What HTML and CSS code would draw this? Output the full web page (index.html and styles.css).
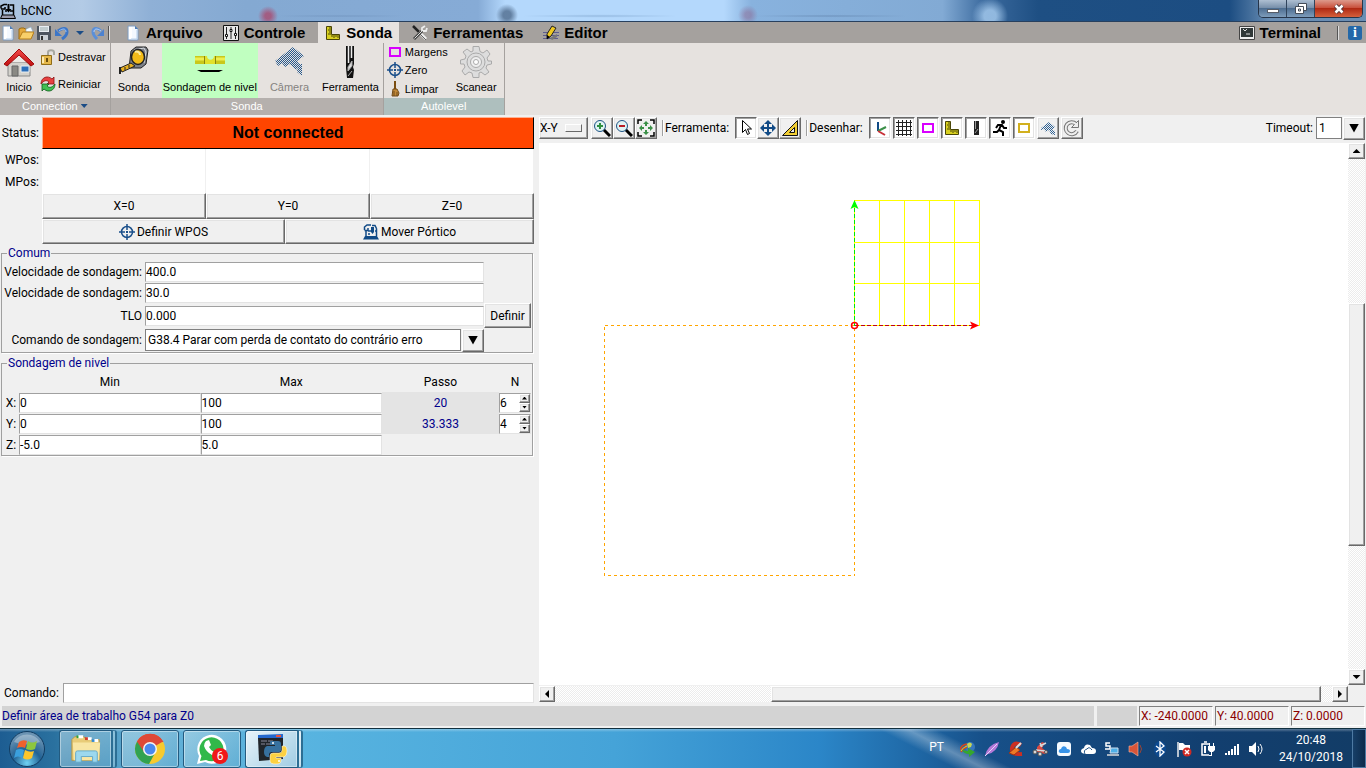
FILE: index.html
```html
<!DOCTYPE html>
<html lang="pt">
<head>
    <meta charset="UTF-8">
    <meta name="viewport" content="width=device-width, initial-scale=1.0">
    <title>bCNC</title>
    <link rel="stylesheet" href="styles.css">
</head>
<body>
    <!-- shared icons -->
    <svg class="defs" aria-hidden="true">
        <symbol id="target" viewBox="0 0 16 16"><g fill="none" stroke="#1a4f8a" stroke-width="1.5"><circle cx="8" cy="8" r="5.5"/><path d="M8 0v6M8 10v6M0 8h6M10 8h6"/></g><rect x="7" y="7" width="2" height="2" fill="#1a4f8a"/></symbol>
        <symbol id="page" viewBox="0 0 16 16"><path d="M3 1h7l3 3v11H3z" fill="#f4f9ff" stroke="#7e9cc0"/><path d="M4 2h3v12H4z" fill="#fff"/><path d="M10 1v3h3z" fill="#4f7db5"/><path d="M12 5v9H6" fill="none" stroke="#b9d0ea"/></symbol>
        <symbol id="ruler" viewBox="0 0 16 16"><path d="M1.500 1.500h5v8h8v5h-13z" fill="#d8d020" stroke="#4a4608"/><path d="M6 3H4M6 5H3M6 7H4M6 9H3M7 10v2M9 10v3M11 10v2M13 10v3" stroke="#4a4608"/></symbol>
        <symbol id="camera" viewBox="0 0 32 32"><path d="M2 15L20 1l11 9-7 5 3 4-4 5-6-6-5 3-3-4-4 3z"/><path d="M25 18h4v12l-5-4z"/></symbol>
        <symbol id="gantry" viewBox="0 0 16 16"><path d="M0 15.500h16L14 12H2z" fill="#104a86"/><path d="M3 12V7M1.500 6V3L4 1h4M1.500 6.500H5V4M13.500 12V4.500M9 1.500h3l1.500 3M5 7h3M12 7h2M5 10h2" fill="none" stroke="#104a86" stroke-width="1.500"/><path d="M8 3h3v5L9.500 10 8 8z" fill="#104a86"/></symbol>
        <symbol id="bit" viewBox="0 0 10 32"><path d="M1 0h8v18l-1 3 1 3-1 8H2L1 22z" fill="#111"/><path d="M3.500 0v17M6.500 0v12" stroke="#eee" stroke-width="1.500"/><path d="M7 15L3 21v4l4-5zM7 25l-4 5" stroke="#aaa" fill="#ddd"/></symbol>
        <pattern id="stipple" width="2" height="2" patternUnits="userSpaceOnUse"><path d="M0 0h1v1H0zM1 1h1v1H1z" fill="#2d6093"/></pattern>
        <pattern id="stippleBig" width="2" height="2" patternUnits="userSpaceOnUse"><path d="M0 0h1v1H0zM1 1h1v1H1z" fill="#26588c"/></pattern>
        <linearGradient id="roof" x2="0" y2="1"><stop stop-color="#f24a4a"/><stop offset="1" stop-color="#c01010"/></linearGradient>
        <radialGradient id="orb" cx=".5" cy=".9" r=".8"><stop stop-color="#6fd2f4"/><stop offset=".5" stop-color="#226294"/><stop offset="1" stop-color="#6b93b3"/></radialGradient>
    </svg>

    <header class="titlebar">
        <svg class="icon16" viewBox="0 0 16 16"><path d="M.5 15.500h15L14 12H2z" fill="#99a" stroke="#000"/><path d="M2.500 12V7M1 5.500V3l3-1.500h3M1 6h4V4M13.500 12V2H10M5 8h2M10 8h3" fill="none" stroke="#000" stroke-width="1.500"/><path d="M7.500 1h2v5h2L8.500 9.500 5.500 6h2z"/></svg>
        <h1>bCNC</h1>
        <div class="window-buttons">
            <button class="minimize" aria-label="Minimizar"><svg viewBox="0 0 14 12"><rect x="1.500" y="6.500" width="11" height="3" fill="#fff" stroke="#555c68"/></svg></button>
            <button class="restore" aria-label="Restaurar"><svg viewBox="0 0 14 12"><path d="M4.500.5h8v7h-8z" fill="#fff" stroke="#444c58"/><path d="M1.500 3.500h8v7h-8z" fill="#fff" stroke="#444c58"/><path d="M4.500 6h2v2h-2z" fill="#fff" stroke="#444c58"/></svg></button>
            <button class="close" aria-label="Fechar"><svg viewBox="0 0 14 12"><path d="M3.500 2.500l7 7M10.500 2.500l-7 7" stroke="#55363a" stroke-width="4.500"/><path d="M3.500 2.500l7 7M10.500 2.500l-7 7" stroke="#fff" stroke-width="2.500"/></svg></button>
        </div>
    </header>

    <nav class="tabbar">
        <div class="quick">
            <button aria-label="Novo"><svg class="icon16"><use href="#page"/></svg></button>
            <button aria-label="Abrir"><svg class="icon16" viewBox="0 0 16 16"><path d="M1 14V4l2-1h3l1 1h6v3" fill="#e5a93a" stroke="#9a6a12"/><path d="M8 4l5-2 2 5H8z" fill="#f5fbff" stroke="#86a9c8" stroke-width=".6"/><path d="M1 14L4.500 7H16l-3 7z" fill="#f8cf6a" stroke="#b47c18"/></svg></button>
            <button aria-label="Salvar"><svg class="icon16" viewBox="0 0 16 16"><path d="M1 1h14v14H1z" fill="#4d5560"/><path d="M3 1h10v6H3z" fill="#e9eef3"/><path d="M4 3h8M4 5h8" stroke="#9aa"/><path d="M4 10h8v5H4z" fill="#ccd2d8"/><path d="M5 11h2v4H5z" fill="#333"/></svg></button>
            <button aria-label="Desfazer"><svg class="icon16" viewBox="0 0 16 16"><path d="M4 6c5-4 9-3 9 1 0 3-2 5-5 7" fill="none" stroke="#3c76c8" stroke-width="3"/><path d="M1 4v7h7z" fill="#3c76c8"/><path d="M5 6c4-3 7-2.500 7 1" fill="none" stroke="#9fc4f5"/></svg></button>
            <button aria-label="Histórico"><svg class="icon16" viewBox="0 0 16 16"><path d="M4 6h8l-4 4z" fill="#1b4c86"/></svg></button>
            <button aria-label="Refazer"><svg class="icon16" viewBox="0 0 16 16"><path d="M11 6C7 2 3 3 3 7c0 3 2 5 4 7" fill="none" stroke="#5a8fd8" stroke-width="3"/><path d="M14 4v7H7z" fill="#4c82d0"/><path d="M11 6C7 3 4 3.500 4 7" fill="none" stroke="#b4d2fa"/></svg></button>
            <span class="bar"></span>
        </div>
        <div class="tabs">
            <button class="tab"><svg class="icon16"><use href="#page"/></svg>Arquivo</button>
            <button class="tab"><svg class="icon16" viewBox="0 0 16 16"><path d="M.5.5h15v15H.5z" fill="#e8e8e8" stroke="#111"/><path d="M3.500 2v12M8 2v12M12.500 2v12" stroke="#222"/><path d="M2.500 9.500h2v2h-2zM7 4.500h2v2H7zM11.500 8.500h2v2h-2z" fill="#fff" stroke="#111"/></svg>Controle</button>
            <button class="tab active"><svg class="icon16"><use href="#ruler"/></svg>Sonda</button>
            <button class="tab"><svg class="icon16" viewBox="0 0 16 16"><path d="M1 1l6 6" stroke="#222" stroke-width="2.500"/><path d="M7 7l7 7" stroke="#eee" stroke-width="3"/><path d="M7 8l7 7" stroke="#666"/><path d="M2 14l8-8" stroke="#444" stroke-width="3"/><path d="M2.500 13.500l8-8" stroke="#ddd"/><path d="M10 6V3l3-2M11 6h3l1-3" fill="none" stroke="#eee" stroke-width="1.800"/></svg>Ferramentas</button>
            <button class="tab"><svg class="icon16" viewBox="0 0 16 16"><path d="M0 7.500h16M0 10.500h16M0 13.500h15" stroke="#5c5c90"/><path d="M7 13l7-4v3l-5 3z" fill="#777"/><path d="M4 9l5-8 4 2-5 8-4 3z" fill="#f0c820" stroke="#222"/><path d="M4 10v4l3-2z"/></svg>Editor</button>
        </div>
        <div class="tabs right">
            <button class="tab"><svg class="icon16" viewBox="0 0 16 16"><path d="M.5 1.500h15v13H.5z" fill="#eee" stroke="#444"/><path d="M2 3h12v9H2z" fill="#303838"/><path d="M4 4l2 2 2-2M7 9h4" fill="none" stroke="#ddd"/></svg>Terminal</button>
            <span class="bar"></span>
            <button class="info" aria-label="Informação">i</button>
        </div>
    </nav>

    <section class="ribbon">
        <div class="group">
            <div class="tools">
                <button class="big"><svg class="icon32" viewBox="0 0 32 32"><path d="M5 16h22v14H5z" fill="#d4d2cc" stroke="#888"/><path d="M9 20h6v10H9z" fill="#8a8984" stroke="#666"/><path d="M18 20h8v6h-8z" fill="#2d6fb8" stroke="#e9eef2"/><path d="M4 16L16 4l12 12" fill="#eceae6"/><path d="M1 18L16 3l15 15-3 2L16 9 4 20z" fill="url(#roof)" stroke="#a00c0c"/></svg>Inicio</button>
                <div class="stack">
                    <button><svg class="icon16" viewBox="0 0 16 16"><path d="M8 7V3.500C8 .5 14 .5 14 3.500V6" fill="none" stroke="#a8a8a0" stroke-width="2"/><path d="M1.500 6.500h10v9h-10z" fill="#e6b84a" stroke="#8f6c18"/><path d="M3 8v6" stroke="#fbe9b0" stroke-width="2"/><path d="M6 9h2v4H6z" fill="#6b4d0c"/></svg>Destravar</button>
                    <button><svg class="icon16" viewBox="0 0 16 16"><path d="M1 8C1 1 8-1 12 3l2-2v7H7l2-2C7 4 4 4 1 8z" fill="#e84040" stroke="#8c1010" stroke-width=".8"/><path d="M15 8c0 7-7 9-11 5l-2 2V8h7l-2 2c2 2 5 2 8-2z" fill="#42c052" stroke="#0d5c1a" stroke-width=".8"/></svg>Reiniciar</button>
                </div>
            </div>
            <div class="caption">Connection <span class="down"></span></div>
        </div>
        <div class="group">
            <div class="tools spaced">
                <button class="big"><svg class="icon32" viewBox="0 0 32 32"><path d="M13 5l5-4h10l2 3-2 14-5 4H11z" fill="#7c8088" stroke="#222"/><path d="M16 4l10-2 2 4-2 11" fill="none" stroke="#d5d8dc"/><ellipse cx="20" cy="11" rx="6.500" ry="7.500" fill="#f3bb18" stroke="#222" stroke-width="1.500"/><path d="M17 6c2-1 5 0 5 3" fill="none" stroke="#ffeb9a" stroke-width="2"/><path d="M2 22l11-5 4 3-13 6z" fill="#e8b020" stroke="#222"/><path d="M2 21v7" stroke="#222" stroke-width="2"/><path d="M7 21v3M11 19v3" stroke="#222"/></svg>Sonda</button>
                <button class="big selected"><svg class="icon32" viewBox="0 0 32 32"><path d="M1 10h30v8H1z" fill="#c9c81c"/><path d="M1 13h30" stroke="#eeee50" stroke-width="3"/><path d="M11 10h10v8H11z" fill="#e2e12c"/><path d="M10.500 10v8M21.500 10v8" stroke="#888510"/><path d="M13 10h7c0 5-7 5-7 0" fill="#c0ffc0"/><path d="M3 24h26l-4 2H7z"/></svg>Sondagem de nivel</button>
                <button class="big" disabled><svg class="icon32" fill="url(#stippleBig)"><use href="#camera"/></svg>Câmera</button>
                <button class="big"><svg class="icon32" viewBox="-11 0 32 32"><use href="#bit" width="10" height="32"/></svg>Ferramenta</button>
            </div>
            <div class="caption">Sonda</div>
        </div>
        <div class="group level">
            <div class="tools">
                <div class="stack">
                    <button><svg class="icon16" viewBox="0 0 16 16"><path d="M3 4h10v8H3z" fill="none" stroke="#d800ff" stroke-width="2"/></svg>Margens</button>
                    <button><svg class="icon16"><use href="#target"/></svg>Zero</button>
                    <button><svg class="icon16" viewBox="0 0 16 16"><path d="M8 0v8" stroke="#7a4d10" stroke-width="2"/><path d="M6 8h4l2 4-1 3H5z" fill="#c08838" stroke="#714b18"/><path d="M7 10v5M10 11v4" stroke="#714b18"/></svg>Limpar</button>
                </div>
                <button class="big"><svg class="icon32" viewBox="0 0 32 32"><g fill="#ddd" stroke="#aaa"><path d="M13 .5h6l1 5 3 1.500 4-3 3 4-3 4 1 3h3.500v3L27 19l-1 3 3 4-4 3-4-3-2 1v4.500h-6L12 27l-3-1-4 3-3-4 3-4-1-3H.5v-4L5 13l1-3-3-4 4-3 4 3 2-1z"/><circle cx="16" cy="16" r="9"/><circle cx="16" cy="16" r="5.500" fill="#eee"/><circle cx="16" cy="16" r="2.500" fill="#fff"/></g></svg>Scanear</button>
            </div>
            <div class="caption">Autolevel</div>
        </div>
    </section>

    <main class="workspace">
        <section class="panel">
            <div class="dro">
                <span class="name">Status:</span>
                <button class="status">Not connected</button>
                <div class="name axis-names"><span>WPos:</span><span>MPos:</span></div>
                <div class="readout"></div><div class="readout"></div><div class="readout"></div>
                <div class="zeros"><button class="raised">X=0</button><button class="raised">Y=0</button><button class="raised">Z=0</button></div>
                <div class="moves">
                    <button class="raised"><svg class="icon16"><use href="#target"/></svg>Definir WPOS</button>
                    <button class="raised"><svg class="icon16"><use href="#gantry"/></svg>Mover Pórtico</button>
                </div>
            </div>

            <fieldset class="common">
                <legend>Comum</legend>
                <label for="fast">Velocidade de sondagem:</label><input type="text" id="fast" value="400.0">
                <label for="feed">Velocidade de sondagem:</label><input type="text" id="feed" value="30.0">
                <label for="tlo">TLO</label><input type="text" id="tlo" value="0.000"><button class="raised">Definir</button>
                <label for="cmd">Comando de sondagem:</label>
                <div class="combo">
                    <select id="cmd"><option>G38.4 Parar com perda de contato do contrário erro</option></select>
                    <button class="raised" aria-label="Abrir lista"><span class="arrow"></span></button>
                </div>
            </fieldset>

            <fieldset>
                <legend>Sondagem de nivel</legend>
                <table class="level-table">
                    <thead>
                        <tr><th class="axis"></th><th>Min</th><th>Max</th><th class="step">Passo</th><th class="count">N</th></tr>
                    </thead>
                    <tbody>
                        <tr>
                            <th>X:</th>
                            <td><input type="text" value="0" aria-label="X Min"></td>
                            <td><input type="text" value="100" aria-label="X Max"></td>
                            <td class="calc">20</td>
                            <td><div class="spin"><input type="text" value="6" aria-label="X N"><div><button class="raised" aria-label="Mais"><span class="arrow up"></span></button><button class="raised" aria-label="Menos"><span class="arrow"></span></button></div></div></td>
                        </tr>
                        <tr>
                            <th>Y:</th>
                            <td><input type="text" value="0" aria-label="Y Min"></td>
                            <td><input type="text" value="100" aria-label="Y Max"></td>
                            <td class="calc">33.333</td>
                            <td><div class="spin"><input type="text" value="4" aria-label="Y N"><div><button class="raised" aria-label="Mais"><span class="arrow up"></span></button><button class="raised" aria-label="Menos"><span class="arrow"></span></button></div></div></td>
                        </tr>
                        <tr>
                            <th>Z:</th>
                            <td><input type="text" value="-5.0" aria-label="Z Min"></td>
                            <td><input type="text" value="5.0" aria-label="Z Max"></td>
                            <td></td>
                            <td></td>
                        </tr>
                    </tbody>
                </table>
            </fieldset>

            <div class="command">
                <label for="command">Comando:</label>
                <input type="text" id="command">
            </div>
        </section>

        <section class="view">
            <div class="toolbar">
                <div class="option raised"><select aria-label="Vista"><option>X-Y</option></select></div>
                <div class="set">
                    <button class="raised" aria-label="Ampliar"><svg class="icon18" viewBox="0 0 18 18"><path d="M10 10l7 7" stroke="#000" stroke-width="3"/><circle cx="7" cy="7" r="5.500" fill="#dff3f3" stroke="#1d5385"/><path d="M7 4v6M4 7h6" stroke="#2f9040" stroke-width="2"/></svg></button>
                    <button class="raised" aria-label="Reduzir"><svg class="icon18" viewBox="0 0 18 18"><path d="M10 10l7 7" stroke="#000" stroke-width="3"/><circle cx="7" cy="7" r="5.500" fill="#dff3f3" stroke="#1d5385"/><path d="M4 7h6" stroke="#b81c24" stroke-width="2"/></svg></button>
                    <button class="raised" aria-label="Ajustar"><svg class="icon18" viewBox="0 0 18 18"><path d="M1 5V1h4M13 1h4v4M17 13v4h-4M5 17H1v-4" fill="none" stroke="#000" stroke-width="1.500"/><path d="M9 2l3 3h-2v2H8V5H6zM9 16l3-3h-2v-2H8v2H6zM2 9l3-3v2h2v2H5v2zM16 9l-3-3v2h-2v2h2v2z" fill="#3b9048"/></svg></button>
                </div>
                <span class="rule"></span>
                <span class="text">Ferramenta:</span>
                <div class="set">
                    <button class="sunken" aria-label="Selecionar"><svg class="icon18" viewBox="0 0 18 18"><path d="M5.500 1.500v12l3-3 2 5 2-1-2-4.500h4z" fill="#fff" stroke="#000"/></svg></button>
                    <button class="raised" aria-label="Mover"><svg class="icon18" viewBox="0 0 18 18"><path d="M9 3v12M3 9h12" stroke="#104a86" stroke-width="2"/><path d="M9 1l4 4H5zM9 17l4-4H5zM1 9l4-4v8zM17 9l-4-4v8z" fill="#104a86"/></svg></button>
                    <button class="raised" aria-label="Medir"><svg class="icon18" viewBox="0 0 18 18"><path d="M1.500 16.500h15v-15z" fill="#f2cf35" stroke="#111"/><path d="M8.500 13.500h5v-5z" fill="#eee" stroke="#111"/></svg></button>
                </div>
                <span class="rule"></span>
                <span class="text">Desenhar:</span>
                <div class="set draw">
                    <button class="sunken" aria-label="Eixos"><svg class="icon18" viewBox="0 0 18 18"><g stroke-width="2" fill="none"><path d="M7 3v9" stroke="#104a86"/><path d="M7 12l8-4" stroke="#3b9048"/><path d="M7 12l7 4" stroke="#c83038"/></g></svg></button>
                    <button class="sunken" aria-label="Grade"><svg class="icon18" viewBox="0 0 18 18"><path d="M1 3.500h16M1 7.500h16M1 11.500h16M1 15.500h16M3.500 1v16M7.500 1v16M11.500 1v16M15.500 1v16" stroke="#222"/></svg></button>
                    <button class="sunken" aria-label="Margens"><svg class="icon18" viewBox="0 0 18 18"><path d="M4 5h10v8H4z" fill="none" stroke="#d800ff" stroke-width="2"/></svg></button>
                    <button class="sunken" aria-label="Sonda"><svg class="icon16"><use href="#ruler"/></svg></button>
                    <button class="sunken" aria-label="Caminhos"><svg class="icon18" viewBox="0 0 18 18"><path d="M7 2h5v14H7z" fill="#222"/><path d="M8.500 2v8M8 14l3-4" stroke="#999"/></svg></button>
                    <button class="sunken" aria-label="Rápidos"><svg class="icon18" viewBox="0 0 18 18"><circle cx="12" cy="3" r="2"/><path d="M5 9l2-3h4l2 3h3M10 6l-2 5 4 2v4M8 11l-2 2H2" fill="none" stroke="#000" stroke-width="2"/></svg></button>
                    <button class="sunken" aria-label="Área de trabalho"><svg class="icon18" viewBox="0 0 18 18"><path d="M4 5h10v8H4z" fill="none" stroke="#d2b01e" stroke-width="2"/></svg></button>
                    <button class="raised" aria-label="Câmera"><svg class="icon18" fill="url(#stipple)" viewBox="0 0 18 18"><path d="M2 9l8-6 6 5-3 3 3 1v4l-4-1-2-4-3 2-2-3-3 1z"/></svg></button>
                    <button class="raised" aria-label="Atualizar"><svg class="icon18" viewBox="0 0 18 18"><path d="M14 12a6 6 0 1 1-1-7" fill="none" stroke="#777" stroke-width="4"/><path d="M15.500 1.500v7h-7z" fill="#eee" stroke="#777"/><path d="M14 12a6 6 0 1 1-1-7" fill="none" stroke="#eee" stroke-width="2"/></svg></button>
                </div>
                <div class="timeout">
                    <label for="timeout">Timeout:</label>
                    <div class="combo">
                        <select id="timeout"><option>1</option></select>
                        <button class="raised" aria-label="Abrir lista"><span class="arrow"></span></button>
                    </div>
                </div>
            </div>
            <div class="canvas-area">
                <svg class="canvas">
                    <g fill="none" shape-rendering="crispEdges">
                        <path d="M65.500 182.500h250v250h-250z" stroke="orange" stroke-dasharray="3 3"/>
                        <path d="M315.500 57.500h125v125h-125zM315.500 99.500h125M315.500 140.500h125M340.500 57.500v125M365.500 57.500v125M390.500 57.500v125M415.500 57.500v125" stroke="#ff0"/>
                        <path d="M315.500 182.500V60" stroke="#00e800" stroke-dasharray="4 2"/>
                        <path d="M315.500 182.500H436" stroke="#c00018" stroke-dasharray="4 2"/>
                    </g>
                    <path d="M315.500 57l4 9-4-2-4 2z" fill="#0f0"/>
                    <path d="M440 182.500l-9-4 2 4-2 4z" fill="red"/>
                    <circle cx="315.500" cy="182.500" r="3" fill="none" stroke="red" stroke-width="1.500"/>
                </svg>
                <div class="scroll vertical">
                    <button class="raised" aria-label="Acima"><span class="arrow up"></span></button>
                    <div class="track"><div class="thumb raised"></div></div>
                    <button class="raised" aria-label="Abaixo"><span class="arrow"></span></button>
                </div>
                <div class="scroll horizontal">
                    <button class="raised" aria-label="Esquerda"><span class="arrow left"></span></button>
                    <div class="track"><div class="thumb raised"></div></div>
                    <button class="raised" aria-label="Direita"><span class="arrow right"></span></button>
                </div>
            </div>
        </section>
    </main>

    <footer class="statusbar">
        <span class="message">Definir área de trabalho G54 para Z0</span>
        <span class="buffer"></span>
        <span class="coord">X: -240.0000</span>
        <span class="coord">Y: 40.0000</span>
        <span class="coord">Z: 0.0000</span>
    </footer>

    <div class="taskbar">
        <button class="start" aria-label="Iniciar"><svg viewBox="0 0 38 38"><circle cx="19" cy="19" r="17.500" fill="url(#orb)" stroke="#113c62"/><path d="M6 12a15 15 0 0 1 26 0q-13 5-26 0" fill="#fff" opacity=".3"/><path d="M11 12q4-3 8-1l-2 7q-4-2-8 0z" fill="#f0602c"/><path d="M20 11q4 3 9 0l-2 8q-4 2-9 0z" fill="#8cc63e"/><path d="M8 20q4-2 8 0l-2 8q-4-3-8 0z" fill="#3ba0dd"/><path d="M17 20q5 3 9 1l-2 7q-5 3-9 0z" fill="#fcc62c"/></svg></button>
        <div class="apps">
            <button class="app grouped" aria-label="Explorador"><svg viewBox="0 0 34 32"><path d="M2 6l3-3h10l2 3h14v22H2z" fill="#e8cc78" stroke="#b59645"/><path d="M8 3h6M17 5h6M24 7h6" stroke="#fff" stroke-width="3"/><path d="M7 3h2" stroke="#2da038" stroke-width="3"/><path d="M16 5h3" stroke="#d33c2c" stroke-width="3"/><path d="M23 7h3" stroke="#3188d0" stroke-width="3"/><path d="M3 9h29l-1 19H4z" fill="#f8e6a4"/><path d="M6 30V20q0-2 2-2h19q2 0 2 2v10h-5v-6H12v6z" fill="#9cd8ee" stroke="#62a8c8"/></svg></button>
            <button class="app" aria-label="Chrome"><svg viewBox="0 0 32 32"><circle cx="16" cy="16" r="15" fill="#f7ca2e"/><path d="M16 16L3 8.500A15 15 0 0 1 29 8.500z" fill="#de4837"/><path d="M16 16L3 8.500A15 15 0 0 0 15 31l6-11z" fill="#31a252"/><path d="M16 9h13.500A15 15 0 0 0 3 8.500L10 19z" fill="#de4837"/><circle cx="16" cy="16" r="7" fill="#f4f4f4"/><circle cx="16" cy="16" r="5.500" fill="#4a88ee"/></svg></button>
            <button class="app" aria-label="WhatsApp"><svg viewBox="0 0 32 32"><path d="M1 31l2-8A14.500 14.500 0 1 1 9 29z" fill="#fff"/><path d="M4 28l1.500-5A12 12 0 1 1 10 27z" fill="#31b84a"/><path d="M10 8l3-1 2 5-2 2q2 4 5 5l2-2 5 2-1 3q-3 3-8 0-6-3-8-9 0-3 2-5" fill="#fff"/></svg><span class="badge">6</span></button>
            <button class="app current grouped" aria-label="Python"><svg viewBox="0 0 32 32"><path d="M2 2l25-1v4L2 6z" fill="#2468cc"/><path d="M20 2h5v2h-5z" fill="#ec5038"/><path d="M2 5h25v21L3 28z" fill="#20252a"/><path d="M5 8h6M12 8h5M5 11h4M10 11h5" stroke="#889"/><path d="M15 8h7q3 0 3 3v6q0 2-3 2h-6q-3 0-3 3v2h-2q-3-1-3-5 0-5 3-6h8v-1h-5v-3q0-1 1-1" fill="#37719f"/><path d="M26 13h3q2 1 2 5 0 5-3 6h-8v1h5v3q0 3-5 3-6 0-6-3v-5q0-3 3-3h6q3 0 3-3z" fill="#fcd142" stroke="#fff" stroke-width=".5"/><circle cx="17" cy="10" r="1" fill="#fff"/><circle cx="23" cy="28" r="1" fill="#fff"/></svg></button>
        </div>
        <div class="tray">
            <span class="lang">PT</span>
            <svg class="icon16" viewBox="0 0 16 16"><circle cx="10" cy="6" r="5" fill="#3676bc"/><path d="M7 3q3-3 5 0l-1 3-3 1z" fill="#c7d654"/><path d="M0 9q1-5 7-6M1 11q2-4 6-5" fill="none" stroke="#d4461c" stroke-width="1.500"/><path d="M1 10q2-4 6-5" fill="none" stroke="#efcc20"/><path d="M2 9l6 1V7l7 4-6 5v-3q-5 0-7-4" fill="#35a72d"/></svg>
            <svg class="icon16" viewBox="0 0 16 16"><path d="M1 15Q3 4 15 1 13 11 4 13z" fill="#b47ad8"/><path d="M1 15L13 3" stroke="#ead2f8"/></svg>
            <svg class="icon16" viewBox="0 0 16 16"><path d="M13 4Q6 0 4 7q-1 7 10 6" fill="none" stroke="#cc2f22" stroke-width="4"/><path d="M8 6l4 3-6 5-5-2z" fill="#ec7a26" stroke="#a03214"/><path d="M8 7l5-5" stroke="#ddd" stroke-width="2"/></svg>
            <svg class="icon16" viewBox="0 0 16 16"><path d="M5 6l5-5 3 1-3 5 4 3-1 3-8-2z" fill="#d84a42"/><path d="M8 5l6-3M4 9l9 1M8 2l2 4" stroke="#d4dadd" stroke-width="1.500"/><circle cx="3" cy="11" r="2" fill="#d8d8d8" stroke="#555"/><circle cx="8" cy="13" r="2" fill="#d8d8d8" stroke="#555"/><circle cx="14" cy="11" r="1.500" fill="#d8d8d8" stroke="#555"/></svg>
            <svg class="icon16" viewBox="0 0 16 16"><rect x="1" y="1" width="14" height="14" rx="3" fill="#f5faff"/><path d="M4 12q-2-1-1-3 1-1 2-1 1-4 5-2l1 2q3 0 3 2t-2 2z" fill="#3793e8"/></svg>
            <svg class="icon16" viewBox="0 0 16 16"><path d="M2 12q-2-2 0-4l2-1q1-5 6-3l2 3q4 0 4 3t-3 3H5z" fill="#fff"/><path d="M5 13q-2-4 2-5 2-3 5 1" fill="none" stroke="#205489"/></svg>
            <svg class="icon16" viewBox="0 0 16 16"><path d="M6 2H2v3h4v3H1" fill="none" stroke="#fff" stroke-width="1.500"/><path d="M7 7h7v5H6z" fill="#4fb0e8" stroke="#cde"/><path d="M3 14h12" stroke="#ddd" stroke-width="1.500"/></svg>
            <svg class="icon16" viewBox="0 0 16 16"><path d="M1 5h3l6-4v14l-6-4H1z" fill="#d85538" stroke="#f5b8a4" stroke-width=".6"/><path d="M12 4q3 4 0 8" fill="none" stroke="#9b4435"/></svg>
            <svg class="icon16" viewBox="0 0 16 16"><ellipse cx="8" cy="8" rx="6" ry="8" fill="#0d4a90"/><path d="M4 5l8 6-4 4V1l4 4-8 6" fill="none" stroke="#fff" stroke-width="1.300"/></svg>
            <svg class="icon16" viewBox="0 0 16 16"><path d="M2 1v15" stroke="#eee" stroke-width="1.500"/><path d="M3 2h4l2 2h5v6H8L6 9H3z" fill="#fff"/><circle cx="11" cy="11" r="4.500" fill="#d02a24"/><path d="M9 9l4 4M13 9l-4 4" stroke="#fff" stroke-width="1.500"/></svg>
            <svg class="icon16" viewBox="0 0 16 16"><path d="M9 14H2V3h7M4 1h3" fill="none" stroke="#fff" stroke-width="1.500"/><path d="M5 5v7" stroke="#fff" stroke-width="2"/><path d="M8 5h7v4l-2 2h-3L8 9zM9 2h1v3H9zM13 2h1v3h-1zM11 11h1v4h-3v-1h2z" fill="#fff"/></svg>
            <svg class="icon16" viewBox="0 0 16 16"><path d="M1 12h2v2H1zM4 10h2v4H4zM7 8h2v6H7zM10 5h2v9h-2zM13 3h2v11h-2z" fill="#fff"/></svg>
            <svg class="icon16" viewBox="0 0 16 16"><path d="M1 5h3l4-4v14l-4-4H1z" fill="#fff"/><path d="M10 5q2 3 0 6M12 3q4 5 0 10" fill="none" stroke="#fff"/></svg>
        </div>
        <div class="clock"><span>20:48</span><span>24/10/2018</span></div>
        <button class="desktop" aria-label="Mostrar área de trabalho"></button>
    </div>
</body>
</html>
```
FILE: styles.css
```css
* {
    box-sizing: border-box;
}

body {
    margin: 0;
    height: 100vh;
    display: flex;
    flex-direction: column;
    overflow: hidden;
    background-color: #f0f0f0;
    color: #000;
    font-family: Roboto, "Noto Sans", sans-serif;
    font-size: 12px;
    line-height: 16px;
}

button,
input,
select {
    margin: 0;
    padding: 0;
    border: none;
    border-radius: 0;
    background: none;
    color: inherit;
    font: inherit;
}

button {
    display: flex;
    align-items: center;
    justify-content: center;
}

svg {
    display: block;
    flex: none;
}

.defs {
    position: absolute;
    width: 0;
    height: 0;
}

.icon16 {
    width: 16px;
    height: 16px;
}

.icon18 {
    width: 18px;
    height: 18px;
}

.icon32 {
    width: 32px;
    height: 32px;
}

/* Tk reliefs */
.raised {
    background-color: #f0f0f0;
    border: 1px solid;
    border-color: #fff #696969 #696969 #fff;
    box-shadow: inset -1px -1px #a0a0a0, inset 1px 1px #e3e3e3;
}

.sunken {
    background-color: #fff;
    border: 1px solid;
    border-color: #696969 #fff #fff #696969;
    box-shadow: inset 1px 1px #a0a0a0, inset -1px -1px #e3e3e3;
}

input,
select {
    min-width: 0;
    height: 20px;
    width: 100%;
    background-color: #fff;
    border: 1px solid;
    border-color: #a0a0a0 #e3e3e3 #e3e3e3 #a0a0a0;
}

select {
    appearance: none;
}

.arrow {
    width: 8px;
    height: 4px;
    background-color: #000;
    clip-path: polygon(0 0, 100% 0, 50% 100%);
}

.arrow.up {
    clip-path: polygon(50% 0, 100% 100%, 0 100%);
}

.arrow.left {
    width: 4px;
    height: 8px;
    clip-path: polygon(100% 0, 100% 100%, 0 50%);
}

.arrow.right {
    width: 4px;
    height: 8px;
    clip-path: polygon(0 0, 100% 50%, 0 100%);
}

/* Title bar, glass with the browser tabs showing through */
.titlebar {
    display: flex;
    align-items: center;
    gap: 5px;
    height: 22px;
    flex: none;
    border-bottom: 1px solid #28405e;
    background:
        radial-gradient(circle at 268px 16px, #b0385caa 3px, #b0385c00 10px),
        radial-gradient(circle at 507px 15px, #4f6b8ccc 4px, #4f6b8c00 11px),
        radial-gradient(circle at 748px 15px, #8c6a9488 3px, #8c6a9400 10px),
        radial-gradient(circle at 990px 16px, #a8cdf0cc 6px, #a8cdf000 18px),
        radial-gradient(ellipse at 340px 16px, #5d7ea866, #5d7ea800 70px),
        radial-gradient(ellipse at 600px 16px, #6a90ba66, #6a90ba00 80px),
        radial-gradient(ellipse at 830px 16px, #54749c66, #54749c00 80px),
        linear-gradient(90deg, #a9c2de 0, #b3cbe6 6%, #8fb0d6 11%, #84a9d2 18%, #86abd6 35%, #b4d8fc 37%, #b4d8fc 53%, #88b2de 55%, #82aad4 69%, #3c6b9f 72%, #1e4f83 76%, #1c4d82 90%, #6a8eb4 93%);
}

.titlebar h1 {
    margin: 0;
    font-size: 12px;
    font-weight: normal;
}

.window-buttons {
    display: flex;
    align-self: flex-start;
    margin-left: auto;
    margin-right: 3px;
    height: 18px;
    border: 1px solid #26354a;
    border-top: none;
    border-radius: 0 0 5px 5px;
    overflow: hidden;
}

.window-buttons button {
    width: 28px;
    border-right: 1px solid #30445c;
    background: linear-gradient(#aebfd2, #7890ab 45%, #4e6e91 50%, #7d9cbb);
}

.window-buttons svg {
    width: 14px;
    height: 12px;
}

.window-buttons .close {
    width: 47px;
    border-right: none;
    background: linear-gradient(#dd9a8c, #c9513d 45%, #b02a14 50%, #d5603c);
}

/* Tabs */
.tabbar {
    display: flex;
    height: 21px;
    flex: none;
    background-color: #a5a19e;
}

.quick {
    display: flex;
    align-items: center;
    gap: 2px;
}

.bar {
    width: 2px;
    height: 14px;
    border-left: 1px solid #555;
    border-right: 1px solid #ddd;
}

.tabs {
    display: flex;
    align-items: stretch;
    gap: 6px;
    margin-left: 8px;
    font-family: "Liberation Sans", Arial, sans-serif;
    font-size: 15px;
    font-weight: bold;
}

.tab {
    gap: 5px;
    padding: 0 7px;
}

.tab.active {
    background-color: #e6e2df;
}

.tabs.right {
    margin-left: auto;
    margin-right: 4px;
    align-items: center;
    gap: 9px;
}

.info {
    width: 14px;
    height: 14px;
    background-color: #2468a8;
    border-radius: 2px;
    color: #fff;
    font-family: "Liberation Serif", serif;
    font-size: 14px;
}

/* Ribbon */
.ribbon {
    display: flex;
    height: 72px;
    flex: none;
    background-color: #e6e2df;
    font-family: "Liberation Sans", Arial, sans-serif;
    font-size: 11px;
    line-height: 14px;
}

.group {
    display: flex;
    flex-direction: column;
    border-right: 1px solid #a5a19e;
}

.tools {
    display: flex;
    flex: 1;
    gap: 4px;
    padding: 0 4px 0 2px;
}

.tools.spaced {
    gap: 11px;
    padding: 0 3px 0 6px;
}

.level .tools {
    gap: 7px;
    padding: 0 6px 0 3px;
}

.big {
    flex-direction: column;
    justify-content: flex-start;
    gap: 2px;
    padding: 3px 1px 0;
}

.big.selected {
    background-color: #c0ffc0;
}

.big:disabled {
    color: #85827f;
}

.stack {
    display: flex;
    flex-direction: column;
    justify-content: space-around;
}

.stack button {
    justify-content: flex-start;
    gap: 2px;
}

.caption {
    height: 17px;
    background-color: #b5b0ad;
    color: #fff;
    line-height: 17px;
    text-align: center;
}

.level .caption {
    background-color: #aebfbe;
}

.down {
    display: inline-block;
    width: 7px;
    height: 4px;
    margin-bottom: 2px;
    background-color: #1b4c86;
    clip-path: polygon(0 0, 100% 0, 50% 100%);
}

/* Workspace */
.workspace {
    display: grid;
    grid-template-columns: 534px minmax(0, 1fr);
    gap: 5px;
    flex: 1;
    min-height: 0;
}

.panel {
    display: flex;
    flex-direction: column;
    padding-top: 2px;
}

.dro {
    display: grid;
    grid-template-columns: 42px repeat(3, 1fr);
    grid-template-rows: 32px 44px 26px 25px;
}

.name {
    align-self: center;
    padding-right: 3px;
    text-align: right;
}

.status {
    grid-column: 2 / 5;
    background-color: #ff4500;
    border: 1px solid;
    border-color: #ffb090 #000 #000 #ffb090;
    font-family: "Liberation Sans", Arial, sans-serif;
    font-size: 16px;
    font-weight: bold;
}

.axis-names {
    display: grid;
    row-gap: 6px;
}

.readout {
    background-color: #fff;
    border-right: 1px solid #f0f0f0;
}

.zeros,
.moves {
    grid-column: 2 / 5;
    display: grid;
    grid-template-columns: repeat(3, 1fr);
}

.moves {
    grid-template-columns: 243px 1fr;
}

.moves button {
    gap: 2px;
}

fieldset {
    min-width: 0;
    margin: 2px 1px 0;
    padding: 0 1px;
    border: 1px solid #a0a0a0;
    box-shadow: 1px 1px #fff;
}

legend {
    margin-left: 4px;
    padding: 0 1px;
    color: #00008b;
}

.common {
    display: grid;
    grid-template-columns: 142px minmax(0, 1fr) 47px;
    grid-template-rows: 21px 21px 25px 24px;
    align-items: center;
    margin-top: 1px;
}

.common label {
    grid-column: 1;
    padding-right: 3px;
    text-align: right;
    white-space: nowrap;
}

.common > .raised {
    height: 25px;
}

.combo {
    display: flex;
    gap: 1px;
}

.combo select {
    height: 22px;
    padding-left: 2px;
    border: 1px solid #808080;
}

.combo button {
    width: 22px;
    height: 23px;
    flex: none;
}

.combo .arrow {
    width: 10px;
    height: 9px;
}

.level-table {
    width: 100%;
    border-collapse: collapse;
    table-layout: fixed;
}

.level-table th,
.level-table td {
    height: 21px;
    padding: 0;
    font-weight: normal;
    text-align: center;
}

.level-table input {
    display: block;
}

.axis {
    width: 16px;
}

.step {
    width: 117px;
}

.count {
    width: 32px;
}

.level-table .calc {
    background-color: #e4e4e4;
    color: #00008b;
}

.spin {
    display: flex;
    height: 20px;
    background-color: #fff;
    border: 1px solid;
    border-color: #a0a0a0 #e3e3e3 #e3e3e3 #a0a0a0;
}

.spin input {
    height: 18px;
    border: none;
}

.spin button {
    width: 11px;
    height: 9px;
}

.spin .arrow {
    width: 5px;
    height: 3px;
}

.command {
    display: flex;
    align-items: center;
    gap: 4px;
    margin-top: auto;
    padding: 0 0 1px 4px;
}

/* Drawing view */
.view {
    display: flex;
    flex-direction: column;
    min-height: 0;
}

.toolbar {
    display: flex;
    align-items: center;
    height: 28px;
    flex: none;
    padding: 0 1px 2px 0;
}

.set {
    display: flex;
}

.set button {
    width: 22px;
    height: 22px;
}

.set + .rule {
    margin-left: 5px;
}

.draw {
    gap: 2px;
}

.option {
    display: flex;
    align-items: center;
    width: 49px;
    height: 22px;
    margin-right: 3px;
    padding-right: 5px;
}

.option select {
    height: 18px;
    border: none;
    background: none;
}

.option::after {
    content: "";
    flex: none;
    width: 15px;
    height: 6px;
    border: 1px solid;
    border-color: #fff #696969 #696969 #fff;
}

.rule {
    width: 2px;
    height: 16px;
    margin-right: 1px;
    border-left: 1px solid #a0a0a0;
    border-right: 1px solid #fff;
}

.text {
    margin-right: 6px;
}

.timeout {
    display: flex;
    align-items: center;
    gap: 3px;
    margin-left: auto;
}

.timeout select {
    width: 26px;
}

.canvas-area {
    display: grid;
    grid-template-columns: minmax(0, 1fr) 18px;
    grid-template-rows: minmax(0, 1fr) 19px;
    flex: 1;
    min-height: 0;
}

.canvas {
    width: 100%;
    height: 100%;
    background-color: #fff;
}

.scroll {
    display: flex;
}

.vertical {
    flex-direction: column;
    padding-right: 1px;
}

.horizontal {
    padding: 1px 0 2px;
}

.scroll button {
    width: 16px;
    height: 16px;
    flex: none;
}

.vertical button {
    width: 17px;
}

.track {
    display: grid;
    flex: 1;
    background: repeating-conic-gradient(#fff 0 25%, #ececec 0 50%) 0 0 / 2px 2px;
}

.vertical .track {
    grid-template-rows: 145fr 244fr 123fr;
}

.vertical .thumb {
    grid-row: 2;
}

.horizontal .track {
    grid-template-columns: 216fr 551fr 11fr;
}

.horizontal .thumb {
    grid-column: 2;
}

/* Status bar */
.statusbar {
    display: flex;
    gap: 2px;
    height: 24px;
    flex: none;
    padding: 2px 1px 2px 2px;
    line-height: 20px;
}

.message {
    flex: 1;
    margin-right: 1px;
    background-color: #d3d3d3;
    color: #00008b;
}

.buffer {
    width: 40px;
    background-color: #d3d3d3;
}

.coord {
    width: 74px;
    padding-left: 1px;
    border: 1px solid;
    border-color: #808080 #fff #fff #808080;
    color: #8b0000;
    line-height: 18px;
}

/* Taskbar */
.taskbar {
    display: flex;
    align-items: center;
    height: 40px;
    flex: none;
    border-top: 1px solid #12303f;
    background:
        linear-gradient(#ffffff50, #ffffff00 8%),
        linear-gradient(27deg, #ffffff00 36%, #ffffff50 50%, #ffffff00 64%) 880px 0 / 130px 100% no-repeat,
        linear-gradient(90deg, #1d5d92 0, #2a719f 4%, #62aed4 10%, #58b4e0 22%, #45a3d8 45%, #2b86c8 60%, #1f68a6 67%, #175089 72%, #123f70 88%, #123c66);
    color: #fff;
}

.start {
    width: 38px;
    height: 38px;
    margin: 0 13px 0 8px;
}

.start svg {
    width: 38px;
    height: 38px;
}

.apps {
    display: flex;
    gap: 4px;
}

.app {
    position: relative;
    width: 58px;
    height: 38px;
    border: 1px solid #235b80;
    border-radius: 3px;
    background: linear-gradient(135deg, #b9dcea99, #67a9ca66);
    box-shadow: inset 0 0 0 1px #ffffff66;
}

.app svg {
    width: 32px;
    height: 32px;
}

.grouped {
    border-right: 6px double #2c6e94;
}

.current {
    background: linear-gradient(135deg, #e8f4fa, #a0cce3);
}

.badge {
    position: absolute;
    right: 12px;
    bottom: 3px;
    width: 16px;
    height: 16px;
    border-radius: 8px;
    background-color: #f01818;
    font-size: 12px;
    line-height: 16px;
}

.tray {
    display: flex;
    align-items: center;
    gap: 8px;
    margin-left: auto;
}

.lang {
    margin-right: 8px;
    padding-bottom: 4px;
}

.clock {
    display: flex;
    flex-direction: column;
    width: 82px;
    margin-left: 6px;
    line-height: 17px;
    text-align: center;
}

.desktop {
    width: 14px;
    height: 39px;
    border: 1px solid #4e7aa3;
    background: linear-gradient(90deg, #173f68, #0d2b4b);
}
```
